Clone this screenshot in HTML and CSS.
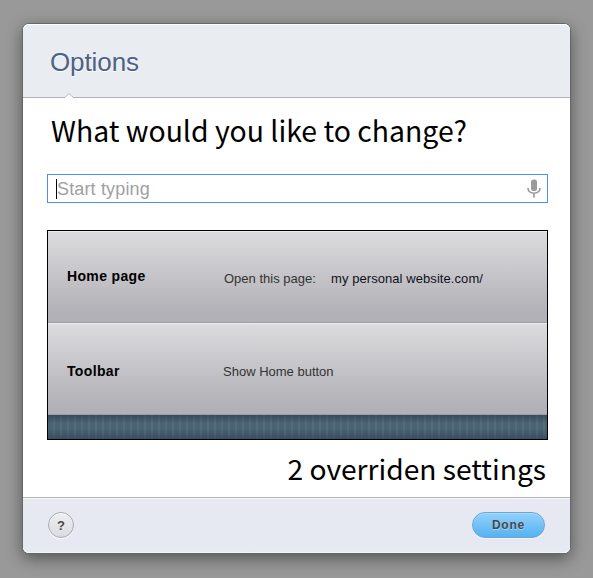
FILE: index.html
```html
<!DOCTYPE html>
<html lang="en">
<head>
<meta charset="utf-8">
<title>Options</title>
<link rel="stylesheet" href="styles.css">
</head>
<body>
<main class="dialog">
  <header class="header">
    <h1>Options</h1>
    <svg class="notch" width="8" height="5" viewBox="0 0 8 5"><path d="M0 5V4L4 0.5L8 4V5Z" fill="#fff"/><path d="M0 4L1 3.5L4 .5L7 3.5L8 4" fill="none" stroke="#aeb2b9"/></svg>
  </header>
  <section class="content">
    <h2 class="question">What would you like to change?</h2>
    <div class="search">
      <span class="caret"></span>
      <span class="placeholder">Start typing</span>
      <svg class="mic" width="14" height="19" viewBox="0 0 14 19"><rect x="4" y="0.5" width="6" height="11.5" rx="2.5" fill="#9b9b9b"/><path d="M1 9C1 16 13 16 13 9M7 14.5V18.5" fill="none" stroke="#9b9b9b" stroke-width="1.7"/></svg>
    </div>
    <div class="settings">
      <div class="row">
        <b class="home">Home page</b>
        <span class="open">Open this page:</span>
        <span class="site">my personal website.com/</span>
      </div>
      <div class="row">
        <b class="toolbar">Toolbar</b>
        <span class="show">Show Home button</span>
      </div>
      <div class="strip"></div>
    </div>
    <p class="summary">2 overriden settings</p>
  </section>
  <footer class="footer">
    <button class="help">?</button>
    <button class="done">Done</button>
  </footer>
</main>
</body>
</html>
```
FILE: styles.css
```css
* { box-sizing: border-box; }
body {
  margin: 0;
  height: 578px;
  padding: 23px 0 0 22px;
  overflow: hidden;
  background: #999;
  font-family: "Liberation Sans", Arial, sans-serif;
}
h1, h2, p { margin: 0; font-weight: normal; white-space: nowrap; }
.dialog {
  width: 549px;
  height: 531px;
  display: flex;
  flex-direction: column;
  border: 1px solid #666;
  border-radius: 7px;
  background: #fff;
  box-shadow: 0 5px 16px rgba(0, 0, 0, .43);
}
.header {
  position: relative;
  height: 74px;
  flex: none;
  padding: 22px 27px 0;
  background: #e9edf2;
  border-bottom: 1px solid #aeb2b9;
  border-radius: 6px 6px 0 0;
  box-shadow: inset 0 1px #fff;
}
.header h1 {
  font-size: 26px;
  line-height: 32px;
  letter-spacing: -.1px;
  color: #4d6285;
  text-shadow: 0 1px #fff;
}
.notch { position: absolute; left: 42px; bottom: -1px; }
.content { height: 399px; flex: none; padding: 16px 22px 0 24px; }
.question, .summary {
  font-family: "Noto Sans CJK SC", "Open Sans", sans-serif;
  color: #000;
  font-size: 28.4px;
  line-height: 34px;
}
.question { height: 38px; padding-left: 4px; line-height: 32px; }
.search {
  width: 501px;
  height: 29px;
  margin-top: 22px;
  padding: 0 6px 0 8px;
  display: flex;
  align-items: center;
  border: 1px solid #4d90f0;
}
.caret { width: 1px; height: 20px; background: #000; }
.placeholder { font-size: 18px; letter-spacing: .15px; color: #a0a0a0; flex: 1; padding-top: 2px; }
.settings {
  width: 501px;
  height: 210px;
  margin-top: 27px;
  border: 1px solid #000;
}
.row {
  display: flex;
  height: 92px;
  padding-left: 19px;
  border-bottom: 1px solid #9d9da6;
  background: linear-gradient(#dcdcde, #b2b1b7 90%);
  box-shadow: inset 0 1px #ececf0;
  font-size: 13px;
  line-height: 16px;
  color: #333;
  white-space: nowrap;
}
.row b { width: 157px; font-size: 14px; letter-spacing: .35px; color: #000; padding-top: 37px; }
.row span { padding-top: 40px; }
.row .open { width: 107px; }
.row .site { color: #101020; letter-spacing: .07px; }
.row .toolbar { width: 156px; padding-top: 40px; }
.row .show { padding-top: 41px; }
.strip {
  height: 24px;
  background:
    linear-gradient(rgba(35, 50, 65, .5), transparent 35%, transparent 55%, rgba(35, 50, 65, .45)),
    repeating-linear-gradient(90deg, #4b6374 0 5px, #546d7d 5px 7px);
}
.summary { margin-top: 11px; padding-right: 2px; font-size: 28.2px; text-align: right; }
.footer {
  flex: 1;
  display: flex;
  justify-content: space-between;
  padding: 14px 25px 0;
  border-top: 1px solid #b4b5b9;
  border-radius: 0 0 6px 6px;
  background: linear-gradient(#e6e9f2 85%, #e7ebee);
  box-shadow: inset 0 1px #f8f9fb, inset 0 -1px #f2f4f5;
}
.footer button {
  height: 26px;
  padding: 0;
  border-radius: 13px;
  font: bold 12px "Liberation Sans", Arial, sans-serif;
  color: #484848;
}
.help {
  width: 26px;
  border: 1px solid #aaabb0;
  background: linear-gradient(#eeeff2, #d9dce2);
  box-shadow: inset 0 1px #fff, 0 1px #fff;
}
.footer .help { font-size: 13px; }
.done {
  width: 73px;
  border: 1px solid #68a6d8;
  background: linear-gradient(#93d1fa, #55b2f1);
  box-shadow: inset 0 1px #a5dbfa, 0 1px #f2f5fa;
  letter-spacing: .8px;
  text-shadow: 0 1px rgba(255, 255, 255, .4);
}
```
